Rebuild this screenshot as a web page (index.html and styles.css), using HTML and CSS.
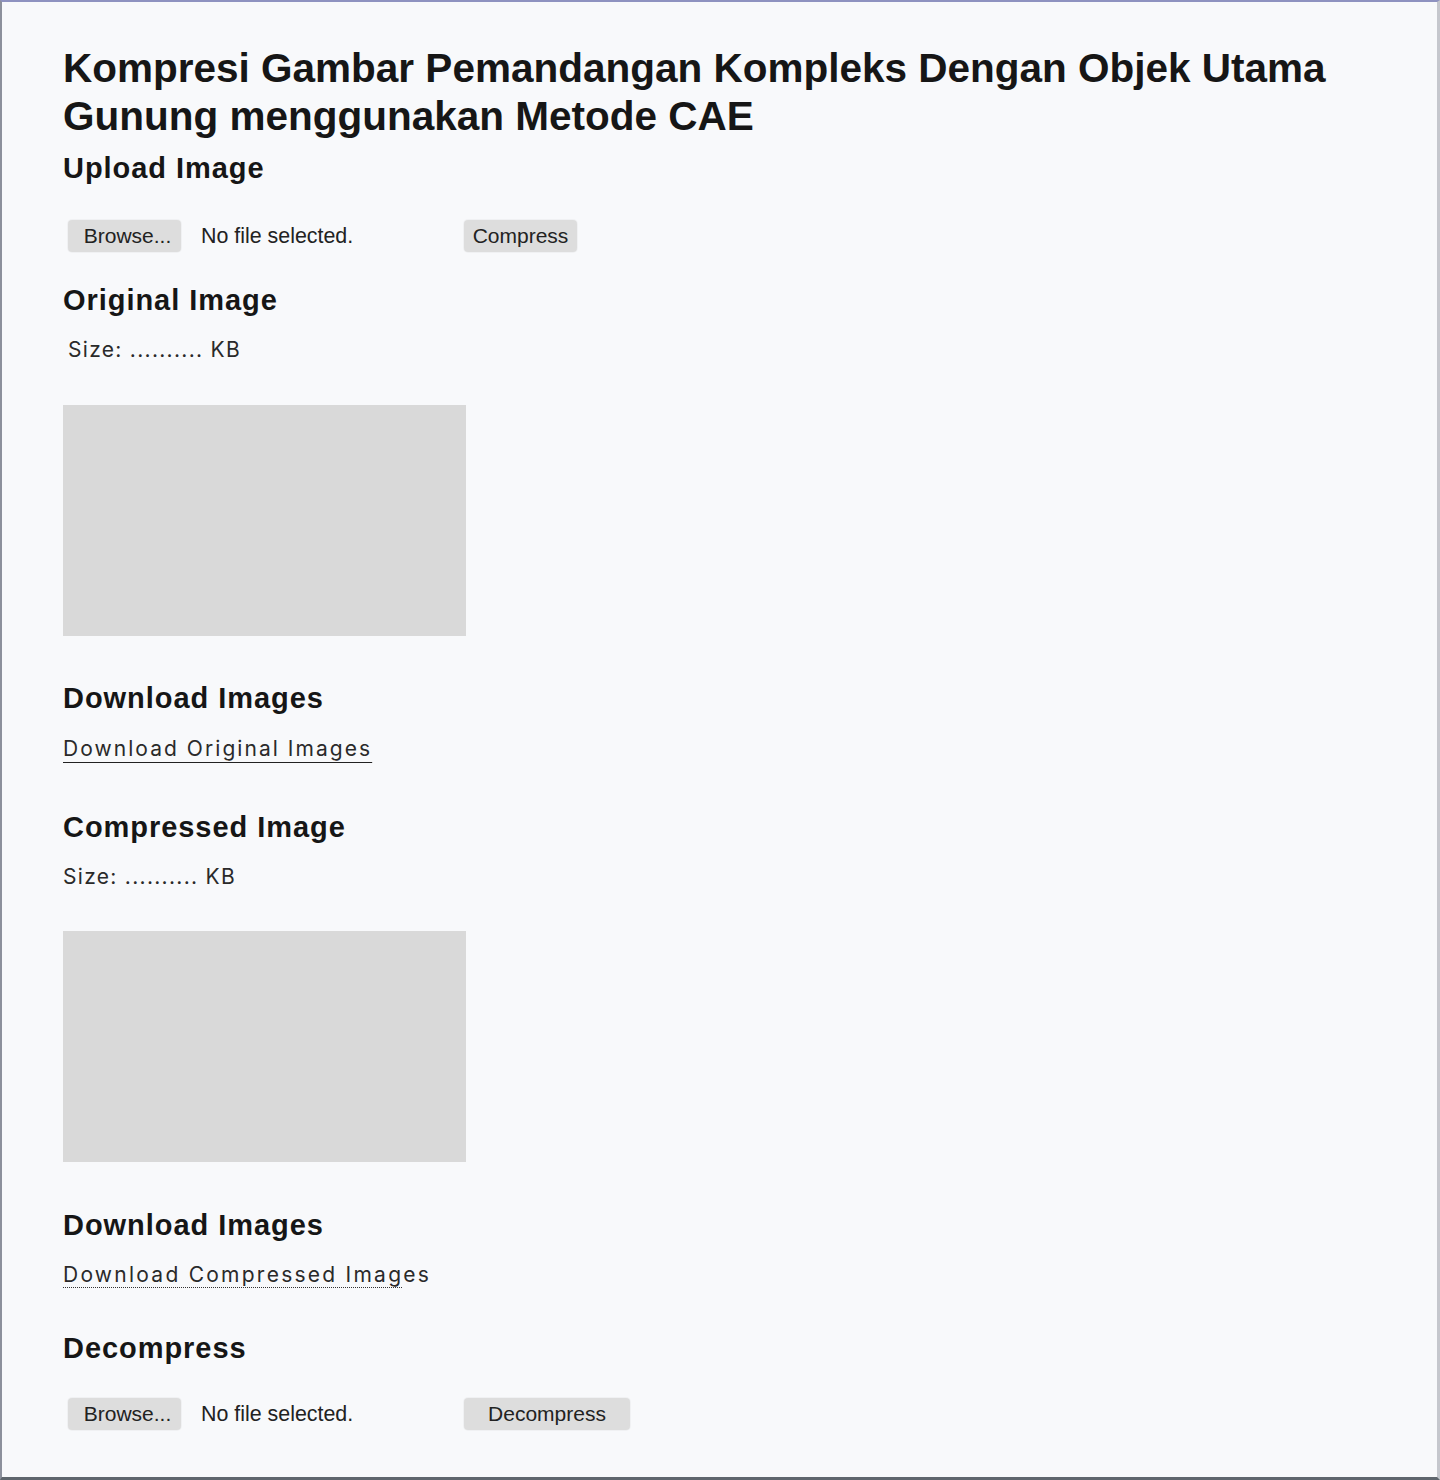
FILE: index.html
```html
<!DOCTYPE html>
<html lang="id">
<head>
<meta charset="utf-8">
<title>Kompresi Gambar Pemandangan</title>
<link rel="stylesheet" href="styles.css">
</head>
<body>
<div class="page">
  <main class="container">
    <h1 class="title">Kompresi Gambar Pemandangan Kompleks Dengan Objek Utama Gunung menggunakan Metode CAE</h1>

    <h2 class="section-title section-title--upload">Upload Image</h2>
    <div class="control-row control-row--upload">
      <div class="file-picker">
        <span class="btn btn--browse">Browse...</span>
        <span class="file-name">No file selected.</span>
      </div>
      <button class="btn btn--compress" type="button">Compress</button>
    </div>

    <h2 class="section-title section-title--original">Original Image</h2>
    <p class="size size--indented">Size: .......... KB</p>
    <div class="preview preview--original"></div>

    <h2 class="section-title section-title--download">Download Images</h2>
    <a class="download-link" href="#">Download Original Images</a>

    <h2 class="section-title section-title--compressed">Compressed Image</h2>
    <p class="size">Size: .......... KB</p>
    <div class="preview preview--compressed"></div>

    <h2 class="section-title section-title--download2">Download Images</h2>
    <a class="download-link download-link--partial" href="#"><span class="underlined">Download Compressed Imag</span>es</a>

    <h2 class="section-title section-title--decompress">Decompress</h2>
    <div class="control-row control-row--decompress">
      <div class="file-picker">
        <span class="btn btn--browse">Browse...</span>
        <span class="file-name">No file selected.</span>
      </div>
      <button class="btn btn--decompress" type="button">Decompress</button>
    </div>
  </main>
</div>
</body>
</html>
```

FILE: styles.css
```css
html, body {
  margin: 0;
  padding: 0;
}

body {
  background: #f8f9fb;
  color: #1c1c1c;
  font-family: "Liberation Sans", Arial, sans-serif;
}

.page {
  box-sizing: border-box;
  min-height: 100vh;
  background: #f8f9fb;
  border-top: 2px solid #8e92c0;
  border-left: 2px solid #8c909c;
  border-right: 3px solid #c5c7cd;
  border-bottom: 3px solid #5f666d;
}

.container {
  display: flex;
  flex-direction: column;
  align-items: flex-start;
  padding: 43px 60px 0 61px;
}

.title {
  margin: 0;
  font-family: "Liberation Sans", Arial, sans-serif;
  font-weight: 700;
  font-size: 40.5px;
  line-height: 47.5px;
  color: #161616;
  max-width: 1300px;
}

.section-title {
  margin: 45px 0 0;
  font-family: "Liberation Sans", Arial, sans-serif;
  font-weight: 700;
  font-size: 29px;
  line-height: 34px;
  letter-spacing: 0.95px;
  color: #161616;
}

.section-title--upload { margin-top: 11px; }
.section-title--original { margin-top: 31px; }
.section-title--download { margin-top: 45px; }
.section-title--compressed { margin-top: 48px; }
.section-title--download2 { margin-top: 46px; }
.section-title--decompress { margin-top: 43px; }

.control-row {
  display: flex;
  align-items: center;
  margin-left: 5px;
}

.control-row--upload { margin-top: 35px; }
.control-row--decompress { margin-top: 33px; }

.file-picker {
  display: flex;
  align-items: center;
  gap: 20px;
  width: 396px;
}

.btn {
  box-sizing: border-box;
  display: inline-flex;
  align-items: center;
  justify-content: center;
  height: 32px;
  padding: 0;
  border: none;
  border-radius: 4px;
  background: #dddddd;
  font-family: "Liberation Sans", Arial, sans-serif;
  font-size: 21px;
  color: #222;
  box-shadow: 0 0 0 1px rgba(0, 0, 0, 0.03);
}

.btn--browse {
  width: 113px;
  padding-left: 6px;
}

.btn--compress { width: 113px; }
.btn--decompress { width: 166px; }

.file-name {
  font-family: "Liberation Sans", Arial, sans-serif;
  font-size: 21.4px;
  color: #222;
}

.size {
  margin: 20px 0 0;
  font-family: Inter, "Liberation Sans", sans-serif;
  font-size: 21px;
  line-height: 26px;
  letter-spacing: 1.3px;
  color: #2a2a2a;
}

.size--indented { margin-left: 5px; }

.preview {
  width: 403px;
  height: 231px;
  background: #d9d9d9;
  margin-top: 41px;
}

.preview--original { margin-top: 42px; }

.download-link {
  display: inline-block;
  margin-top: 20px;
  font-family: Inter, "Liberation Sans", sans-serif;
  font-size: 21px;
  line-height: 26px;
  letter-spacing: 2.05px;
  color: #2a2a2a;
  text-decoration: underline;
  text-decoration-thickness: 1px;
  text-underline-offset: 6px;
  text-decoration-color: #222;
}

.section-title--download + .download-link { margin-top: 21px; }

.download-link--partial {
  text-decoration: none;
  letter-spacing: 2.25px;
}

.download-link--partial .underlined {
  text-decoration: underline dotted;
  text-decoration-thickness: 1px;
  text-underline-offset: 5px;
  text-decoration-color: #333;
}
```
